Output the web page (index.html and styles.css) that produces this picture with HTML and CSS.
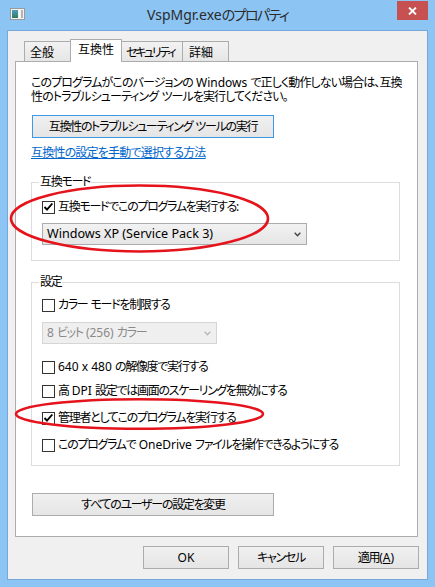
FILE: index.html
```html
<!DOCTYPE html>
<html lang="ja">
<head>
<meta charset="utf-8">
<title>VspMgr.exeのプロパティ</title>
<link rel="stylesheet" href="styles.css">
</head>
<body>
<div class="window">
  <div class="titlebar">
    <svg class="appicon" width="15" height="12" viewBox="0 0 15 12">
      <defs>
        <linearGradient id="ig" x1="0" y1="0" x2="0" y2="1">
          <stop offset="0" stop-color="#4f9fc0"/>
          <stop offset="1" stop-color="#2f7a5e"/>
        </linearGradient>
      </defs>
      <rect x="0.5" y="0.5" width="14" height="11" fill="#f2f2f2" stroke="#9a9a9a"/>
      <rect x="2" y="2" width="6" height="8" fill="url(#ig)"/>
      <rect x="9" y="2" width="1" height="8" fill="#ffffff"/>
      <rect x="11" y="2" width="2" height="8" fill="#b4b4b4"/>
    </svg>
    <div class="title"><span class="en">VspMgr.exe</span>のプロパティ</div>
    <div class="close">
      <svg width="9" height="8" viewBox="0 0 9 8"><path d="M1 0.5 L8 7.5 M8 0.5 L1 7.5" stroke="#fff" stroke-width="1.8" fill="none"/></svg>
    </div>
  </div>
  <div class="client">
    <div class="tabs">
      <div class="tab t-general">全般</div>
      <div class="tab t-compat active">互換性</div>
      <div class="tab t-security">セキュリティ</div>
      <div class="tab t-detail">詳細</div>
    </div>
    <div class="panel">
      <p class="intro">
        <span class="line">このプログラムがこのバージョンの<span class="en"> Windows </span>で正しく動作しない場合は、互換</span>
        <span class="line">性のトラブルシューティング<span class="en"> </span>ツールを実行してください。</span>
      </p>
      <button class="btn wide focus">互換性のトラブルシューティング<span class="en"> </span>ツールの実行</button>
      <a class="link" href="#">互換性の設定を手動で選択する方法</a>
      <fieldset class="group g-mode">
        <legend>互換モード</legend>
        <label class="check"><span class="box"><svg width="11" height="11" viewBox="0 0 11 11"><path d="M1.5 5 L4 7.6 L9.3 1.5" stroke="#000" stroke-width="1.9" fill="none"/></svg></span><span class="txt">互換モードでこのプログラムを実行する:</span></label>
        <div class="select os">
          <span class="en">Windows XP (Service Pack 3)</span>
          <svg width="7" height="5" viewBox="0 0 7 5"><path d="M0.7 0.8 L3.5 3.8 L6.3 0.8" stroke="#444" stroke-width="1.4" fill="none"/></svg>
        </div>
      </fieldset>
      <fieldset class="group g-settings">
        <legend>設定</legend>
        <label class="check"><span class="box"></span><span class="txt">カラー<span class="en"> </span>モードを制限する</span></label>
        <div class="select color disabled">
          <span class="txt"><span class="en">8 </span>ビット<span class="en"> (256) </span>カラー</span>
          <svg width="7" height="5" viewBox="0 0 7 5"><path d="M0.7 0.8 L3.5 3.8 L6.3 0.8" stroke="#b8b8b8" stroke-width="1.4" fill="none"/></svg>
        </div>
        <label class="check r-640"><span class="box"></span><span class="txt"><span class="en">640 x 480 </span>の解像度で実行する</span></label>
        <label class="check r-dpi"><span class="box"></span><span class="txt">高<span class="en"> DPI </span>設定では画面のスケーリングを無効にする</span></label>
        <label class="check r-admin"><span class="box"><svg width="11" height="11" viewBox="0 0 11 11"><path d="M1.5 5 L4 7.6 L9.3 1.5" stroke="#000" stroke-width="1.9" fill="none"/></svg></span><span class="txt">管理者としてこのプログラムを実行する</span></label>
        <label class="check r-onedrive"><span class="box"></span><span class="txt">このプログラムで<span class="en"> OneDrive </span>ファイルを操作できるようにする</span></label>
      </fieldset>
      <button class="btn wide allusers">すべてのユーザーの設定を変更</button>
    </div>
    <div class="footer">
      <button class="btn action"><span class="en">OK</span></button>
      <button class="btn action">キャンセル</button>
      <button class="btn action">適用<span class="en">(<u>A</u>)</span></button>
    </div>
  </div>
  <svg class="annotations" width="435" height="587" viewBox="0 0 435 587">
    <ellipse cx="139.5" cy="218.5" rx="128.5" ry="33" fill="none" stroke="#e5131b" stroke-width="2.6"/>
    <ellipse cx="139.5" cy="414" rx="123.5" ry="14.8" fill="none" stroke="#e5131b" stroke-width="2.6"/>
  </svg>
</div>
</body>
</html>
```
FILE: styles.css
```css
html, body {
  margin: 0;
  padding: 0;
}

body {
  font-family: "Noto Sans", "Noto Sans CJK JP", sans-serif;
  font-size: 12px;
  color: #000;
  font-feature-settings: "palt";
  letter-spacing: -1.3px;
  background: #8cc4f4;
}

/* Latin runs keep their natural spacing; the tightening is for the Japanese text */
.en {
  letter-spacing: 0;
}

.window {
  position: relative;
  width: 435px;
  height: 587px;
  box-sizing: border-box;
  background: #8cc4f4;
  display: flex;
  flex-direction: column;
}

/* title bar */
.titlebar {
  height: 30px;
  display: grid;
  grid-template-columns: 1fr auto 1fr;
  align-items: start;
}

.appicon {
  margin: 8px 0 0 10px;
}

.title {
  font-size: 14px;
  line-height: 20px;
  padding-top: 5px;
  color: #2b2b2b;
  white-space: nowrap;
  letter-spacing: -1.6px;
}

.close {
  justify-self: end;
  width: 31px;
  height: 19px;
  margin: 1px 7px 0 0;
  background: #c75050;
  display: flex;
  align-items: center;
  justify-content: center;
}

/* client area */
.client {
  flex: 1;
  margin: 0 7px 7px;
  background: #f0f0f0;
  border: 1px solid #76a7db;
  padding: 8px 9px 10px 7px;
  display: flex;
  flex-direction: column;
}

/* tabs */
.tabs {
  display: flex;
  align-items: flex-end;
  height: 22px;
  padding-left: 9px;
  position: relative;
  z-index: 1;
}

.tab {
  box-sizing: border-box;
  height: 20px;
  border: 1px solid #acacac;
  border-bottom: none;
  background: linear-gradient(#f2f2f2, #e6e6e6);
  padding: 4px 0 0 5px;
  line-height: 14px;
  margin-left: -1px;
  white-space: nowrap;
}

.t-general { width: 47px; margin-left: 0; letter-spacing: 0; }
.t-compat { width: 52px; letter-spacing: 0; }
.t-security { width: 62px; padding-left: 4px; letter-spacing: -2.3px; }
.t-detail { width: 47px; padding-left: 6px; letter-spacing: 0; }

.tab.active {
  height: 23px;
  margin-bottom: -1px;
  background: #fff;
  padding-top: 3px;
  padding-left: 7px;
}

/* panel */
.panel {
  height: 476px;
  box-sizing: border-box;
  border: 1px solid #acacac;
  background: #fff;
  padding: 14px 15px 0 15px;
}

.intro {
  margin: 0;
  line-height: 14px;
  letter-spacing: -0.9px;
}

.intro .line {
  display: block;
  white-space: nowrap;
}

.btn {
  font: inherit;
  font-feature-settings: "palt";
  letter-spacing: inherit;
  color: #000;
  height: 23px;
  box-sizing: border-box;
  border: 1px solid #acacac;
  background: linear-gradient(#f0f0f0, #e5e5e5);
  padding: 0;
  line-height: 14px;
  white-space: nowrap;
}

.btn.wide {
  display: block;
  width: 242px;
  margin-left: 1px;
}

.btn.focus {
  border-color: #3c98e8;
  margin-top: 11px;
}

.link {
  display: block;
  width: fit-content;
  margin-top: 8px;
  line-height: 14px;
  color: #0066cc;
  text-decoration: underline;
  letter-spacing: -0.8px;
}

/* group boxes */
.group {
  margin: 0;
  width: 369px;
  min-width: 0;
  box-sizing: border-box;
  border: 1px solid #dcdcdc;
  padding: 11px 10px 15px;
}

.group legend {
  padding: 0 1px;
  margin-left: -3px;
  line-height: 14px;
}

.g-mode { margin-top: 15px; }
.g-settings { margin-top: 14px; padding-top: 9px; padding-bottom: 13px; }

.check {
  display: flex;
  align-items: center;
  height: 14px;
  line-height: 14px;
  white-space: nowrap;
}

.txt {
  white-space: pre;
}

.box {
  width: 13px;
  height: 13px;
  margin-right: 3px;
  box-sizing: border-box;
  border: 1px solid #333;
  background: #fff;
  display: flex;
  align-items: center;
  justify-content: center;
  flex: none;
}

.r-640 { margin-top: 16px; }
.r-dpi { margin-top: 10px; }
.r-admin { margin-top: 13px; }
.r-onedrive { margin-top: 13px; }

.select {
  height: 22px;
  box-sizing: border-box;
  border: 1px solid #acacac;
  background: linear-gradient(#f2f2f2, #e5e5e5);
  display: flex;
  align-items: center;
  justify-content: space-between;
  padding: 0 5px 0 4px;
  line-height: 14px;
  white-space: nowrap;
}

.select.os {
  width: 265px;
  margin-top: 9px;
  font-size: 12.6px;
}

.select.disabled {
  width: 175px;
  margin-top: 10px;
  border-color: #d5d5d5;
  background: #efefef;
  color: #8a8a8a;
}

.allusers {
  margin-top: 27px;
}

/* footer buttons */
.footer {
  display: flex;
  justify-content: flex-end;
  gap: 9px;
  margin-top: 9px;
  margin-right: -1px;
}

.btn.action {
  width: 86px;
}

.btn.action u {
  text-decoration: underline;
}

/* red annotation ellipses drawn over the dialog */
.annotations {
  position: absolute;
  left: 0;
  top: 0;
  pointer-events: none;
}
```
